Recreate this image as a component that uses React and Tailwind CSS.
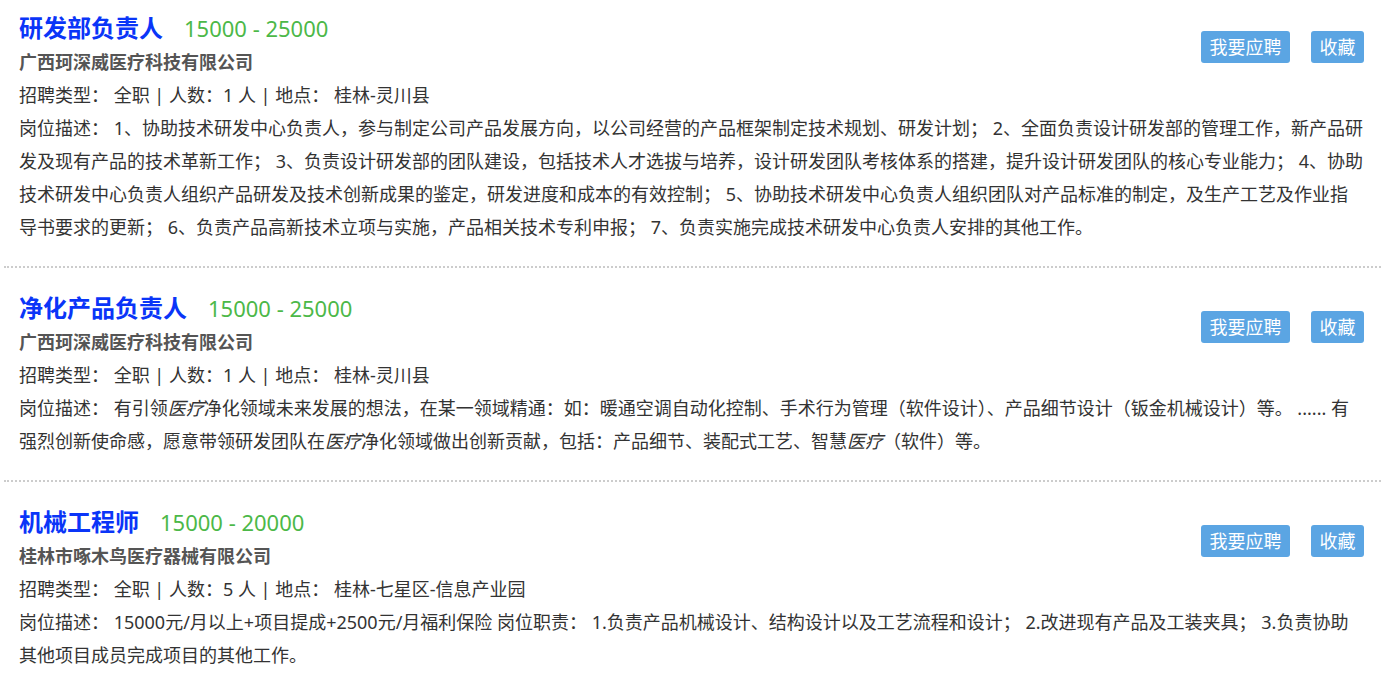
import React from "react";

const jobs = [
  {
    title: "研发部负责人",
    salary: "15000 - 25000",
    company: "广西珂深威医疗科技有限公司",
    count: "1",
    place: "桂林-灵川县",
    desc: [
      "岗位描述： 1、协助技术研发中心负责人，参与制定公司产品发展方向，以公司经营的产品框架制定技术规划、研发计划； 2、全面负责设计研发部的管理工作，新产品研发及现有产品的技术革新工作； 3、负责设计研发部的团队建设，包括技术人才选拔与培养，设计研发团队考核体系的搭建，提升设计研发团队的核心专业能力； 4、协助技术研发中心负责人组织产品研发及技术创新成果的鉴定，研发进度和成本的有效控制； 5、协助技术研发中心负责人组织团队对产品标准的制定，及生产工艺及作业指导书要求的更新； 6、负责产品高新技术立项与实施，产品相关技术专利申报； 7、负责实施完成技术研发中心负责人安排的其他工作。",
    ],
  },
  {
    title: "净化产品负责人",
    salary: "15000 - 25000",
    company: "广西珂深威医疗科技有限公司",
    count: "1",
    place: "桂林-灵川县",
    desc: [
      "岗位描述： 有引领",
      { em: "医疗" },
      "净化领域未来发展的想法，在某一领域精通：如：暖通空调自动化控制、手术行为管理（软件设计）、产品细节设计（钣金机械设计）等。 ...... 有强烈创新使命感，愿意带领研发团队在",
      { em: "医疗" },
      "净化领域做出创新贡献，包括：产品细节、装配式工艺、智慧",
      { em: "医疗" },
      "（软件）等。",
    ],
  },
  {
    title: "机械工程师",
    salary: "15000 - 20000",
    company: "桂林市啄木鸟医疗器械有限公司",
    count: "5",
    place: "桂林-七星区-信息产业园",
    desc: [
      "岗位描述： 15000元/月以上+项目提成+2500元/月福利保险 岗位职责： 1.负责产品机械设计、结构设计以及工艺流程和设计； 2.改进现有产品及工装夹具； 3.负责协助其他项目成员完成项目的其他工作。",
    ],
  },
];

function Job({ job, first }) {
  return (
    <div
      className={
        "pl-[15px] pr-[16px] pb-[22px] border-b-2 border-dotted border-[#cccccc] " +
        (first ? "pt-[9px]" : "pt-[21px]")
      }
    >
      <div className="flex justify-between items-start">
        <div>
          <div className="flex items-baseline gap-[21px] h-[37px] leading-[37px]">
            <span className="text-[24px] font-bold text-[#0a35f8]">{job.title}</span>
            <span className="text-[22px] text-[#4cb848]">{job.salary}</span>
          </div>
          <div className="text-[18px] leading-[33px] font-bold text-[#555555]">{job.company}</div>
          <div className="text-[18px] leading-[33px] text-[#333333]">
            {"招聘类型： 全职 | 人数：" + job.count + " 人 | 地点： " + job.place}
          </div>
        </div>
        <div className="flex gap-[21px] mt-[22px] mr-[1px]">
          <button className="h-[32px] leading-[32px] px-[8.5px] rounded-[3px] bg-[#5ba5e3] text-white text-[18px]">
            我要应聘
          </button>
          <button className="h-[32px] leading-[32px] px-[8.5px] rounded-[3px] bg-[#5ba5e3] text-white text-[18px]">
            收藏
          </button>
        </div>
      </div>
      <div className="text-[18px] leading-[33px] text-[#333333]">
        {job.desc.map((d, i) =>
          typeof d === "string" ? (
            <React.Fragment key={i}>{d}</React.Fragment>
          ) : (
            <em key={i} className="italic">
              {d.em}
            </em>
          )
        )}
      </div>
    </div>
  );
}

export default function App() {
  return (
    <div
      className="bg-white w-[1393px] min-h-[674px] overflow-hidden"
      style={{ fontFamily: '"Noto Sans", "Noto Sans CJK SC", sans-serif' }}
    >
      <div className="ml-[4px] w-[1377px]">
        {jobs.map((job, i) => (
          <Job key={i} job={job} first={i === 0} />
        ))}
      </div>
    </div>
  );
}
